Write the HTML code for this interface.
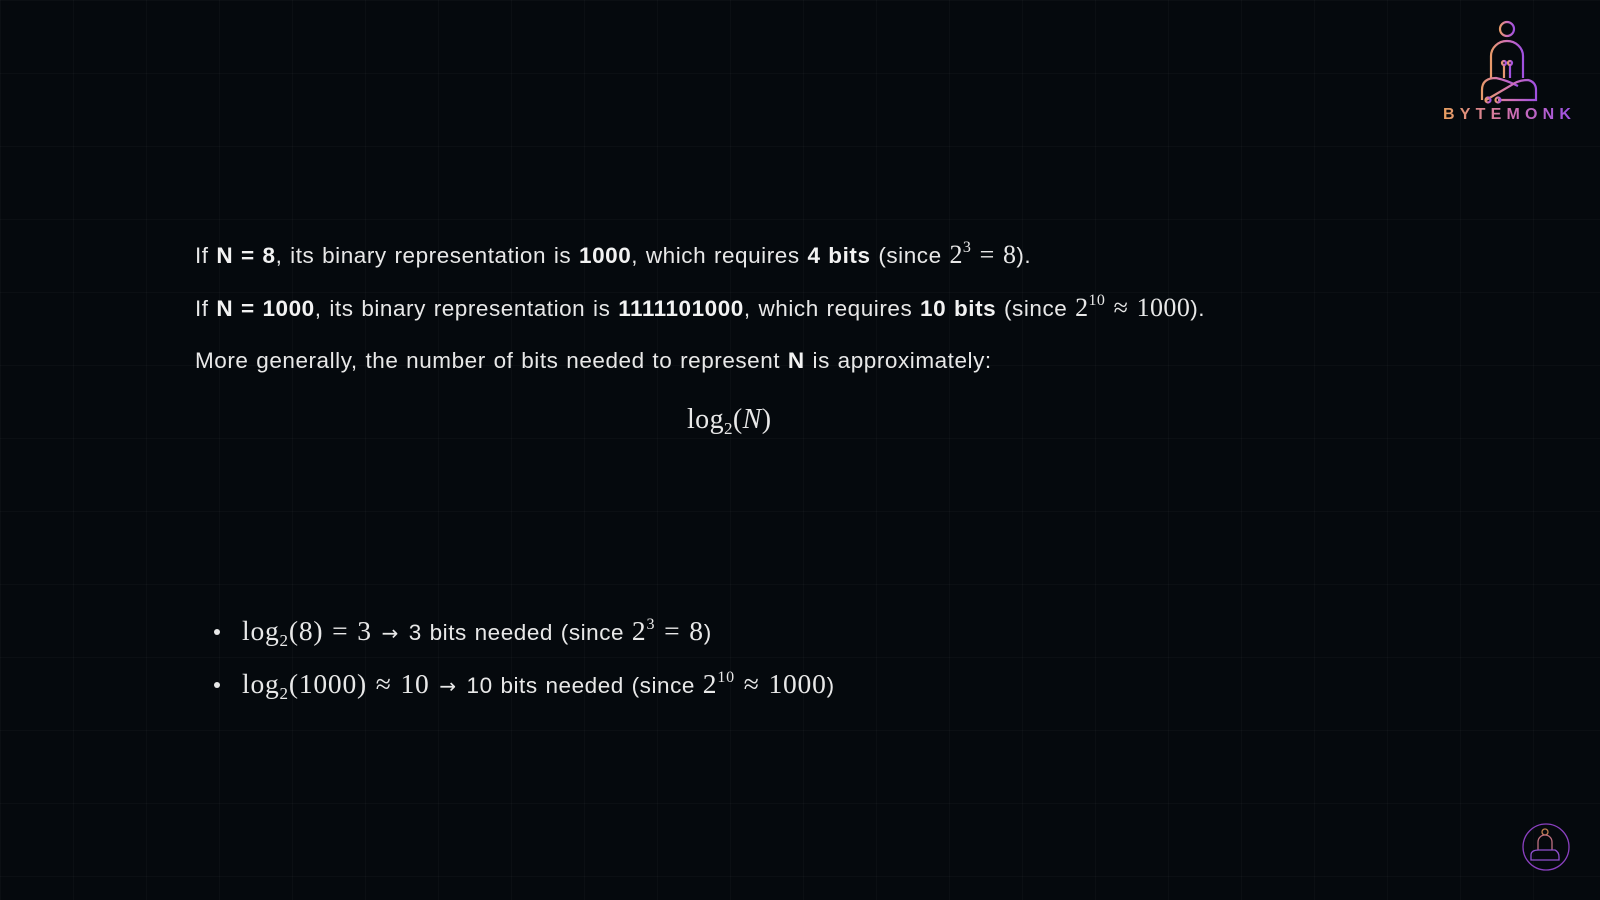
<!DOCTYPE html>
<html><head><meta charset="utf-8"><style>
html,body{margin:0;padding:0}
body{width:1600px;height:900px;overflow:hidden;background:#05090d;position:relative;color:#e8e8e8;font-family:"Liberation Sans",sans-serif;
background-image:linear-gradient(rgba(255,255,255,0.025) 1px,transparent 1px),linear-gradient(90deg,rgba(255,255,255,0.025) 1px,transparent 1px);background-size:73px 73px;}
.l{position:absolute;left:195px;font-size:22.5px;letter-spacing:0.55px;word-spacing:1px;white-space:nowrap;line-height:30px}
b{font-weight:bold;color:#f2f2f2}
.m{font-family:"Liberation Serif",serif;font-size:26px;letter-spacing:0.4px}
.o{margin:0 0.32em}
.bm{font-size:27.5px;letter-spacing:0.8px}
.ar{font-family:"DejaVu Sans",sans-serif;font-size:20px;margin:0 2px}
sup{font-size:16px;vertical-align:11px;line-height:0}
sub{font-size:17px;vertical-align:-6px;line-height:0}
.bul{position:absolute;left:214px;width:6px;height:6px;border-radius:50%;background:#e8e8e8}
</style></head><body>
<div class="l" style="top:240px">If <b>N = 8</b>, its binary representation is <b>1000</b>, which requires <b>4 bits</b> (since <span class="m">2<sup>3</sup><span class="o">=</span>8</span>).</div>
<div class="l" style="top:293px">If <b>N = 1000</b>, its binary representation is <b>1111101000</b>, which requires <b>10 bits</b> (since <span class="m">2<sup>10</sup><span class="o">≈</span>1000</span>).</div>
<div class="l" style="top:346px">More generally, the number of bits needed to represent <b>N</b> is approximately:</div>
<div class="l m" style="top:405px;left:687px;font-size:28px">log<sub>2</sub>(<i>N</i>)</div>
<div class="bul" style="top:629px"></div>
<div class="l" style="top:616px;left:242px"><span class="m bm">log<sub>2</sub>(8)<span class="o">=</span>3</span> <span class="ar">→</span> 3 bits needed (since <span class="m bm">2<sup>3</sup><span class="o">=</span>8</span>)</div>
<div class="bul" style="top:682px"></div>
<div class="l" style="top:669px;left:242px"><span class="m bm">log<sub>2</sub>(1000)<span class="o">≈</span>10</span> <span class="ar">→</span> 10 bits needed (since <span class="m bm">2<sup>10</sup><span class="o">≈</span>1000</span>)</div>

<svg style="position:absolute;left:1452px;top:18px" width="120" height="90" viewBox="0 0 120 90">
<defs><linearGradient id="g" x1="0" x2="1" y1="0" y2="0"><stop offset="0" stop-color="#e89a6a"/><stop offset="0.5" stop-color="#d070b8"/><stop offset="1" stop-color="#a050e0"/></linearGradient></defs>
<g fill="none" stroke="url(#g)" stroke-width="2.2">
<circle cx="55" cy="11" r="7"/>
<path d="M39 60 V38 A16 15 0 0 1 71 38 V60"/>
<path d="M52 60 V46 M58 60 V46"/><circle cx="52" cy="45" r="2"/><circle cx="58" cy="45" r="2"/>
<path d="M30 82 V72 Q30 60 44 60 Q54 62 66 68"/>
<path d="M34 82 L58 68 Q66 62 76 62 Q84 64 84 72 V82 H46"/>
<circle cx="36" cy="82" r="2.5"/><circle cx="46" cy="82" r="2.5"/>
</g></svg>
<div style="position:absolute;left:1443px;top:106px;font-size:16px;font-weight:bold;letter-spacing:5.2px;background:linear-gradient(90deg,#e8a060,#d070b0,#9a50e8);-webkit-background-clip:text;background-clip:text;color:transparent">BYTEMONK</div>

<svg style="position:absolute;left:1521px;top:822px" width="50" height="50" viewBox="0 0 50 50">
<g fill="none" stroke-width="1.3"><circle cx="25" cy="25" r="23" stroke="#8a40c0"/>
<circle cx="24" cy="10" r="3" stroke="#c08050"/>
<path d="M17 28 V20 A7 7 0 0 1 31 20 V28" stroke="#c07080"/>
<path d="M10 38 V33 Q10 28 18 28 L34 28 Q38 30 38 35 V38 Z" stroke="#9050d0"/></g></svg>
</body></html>
